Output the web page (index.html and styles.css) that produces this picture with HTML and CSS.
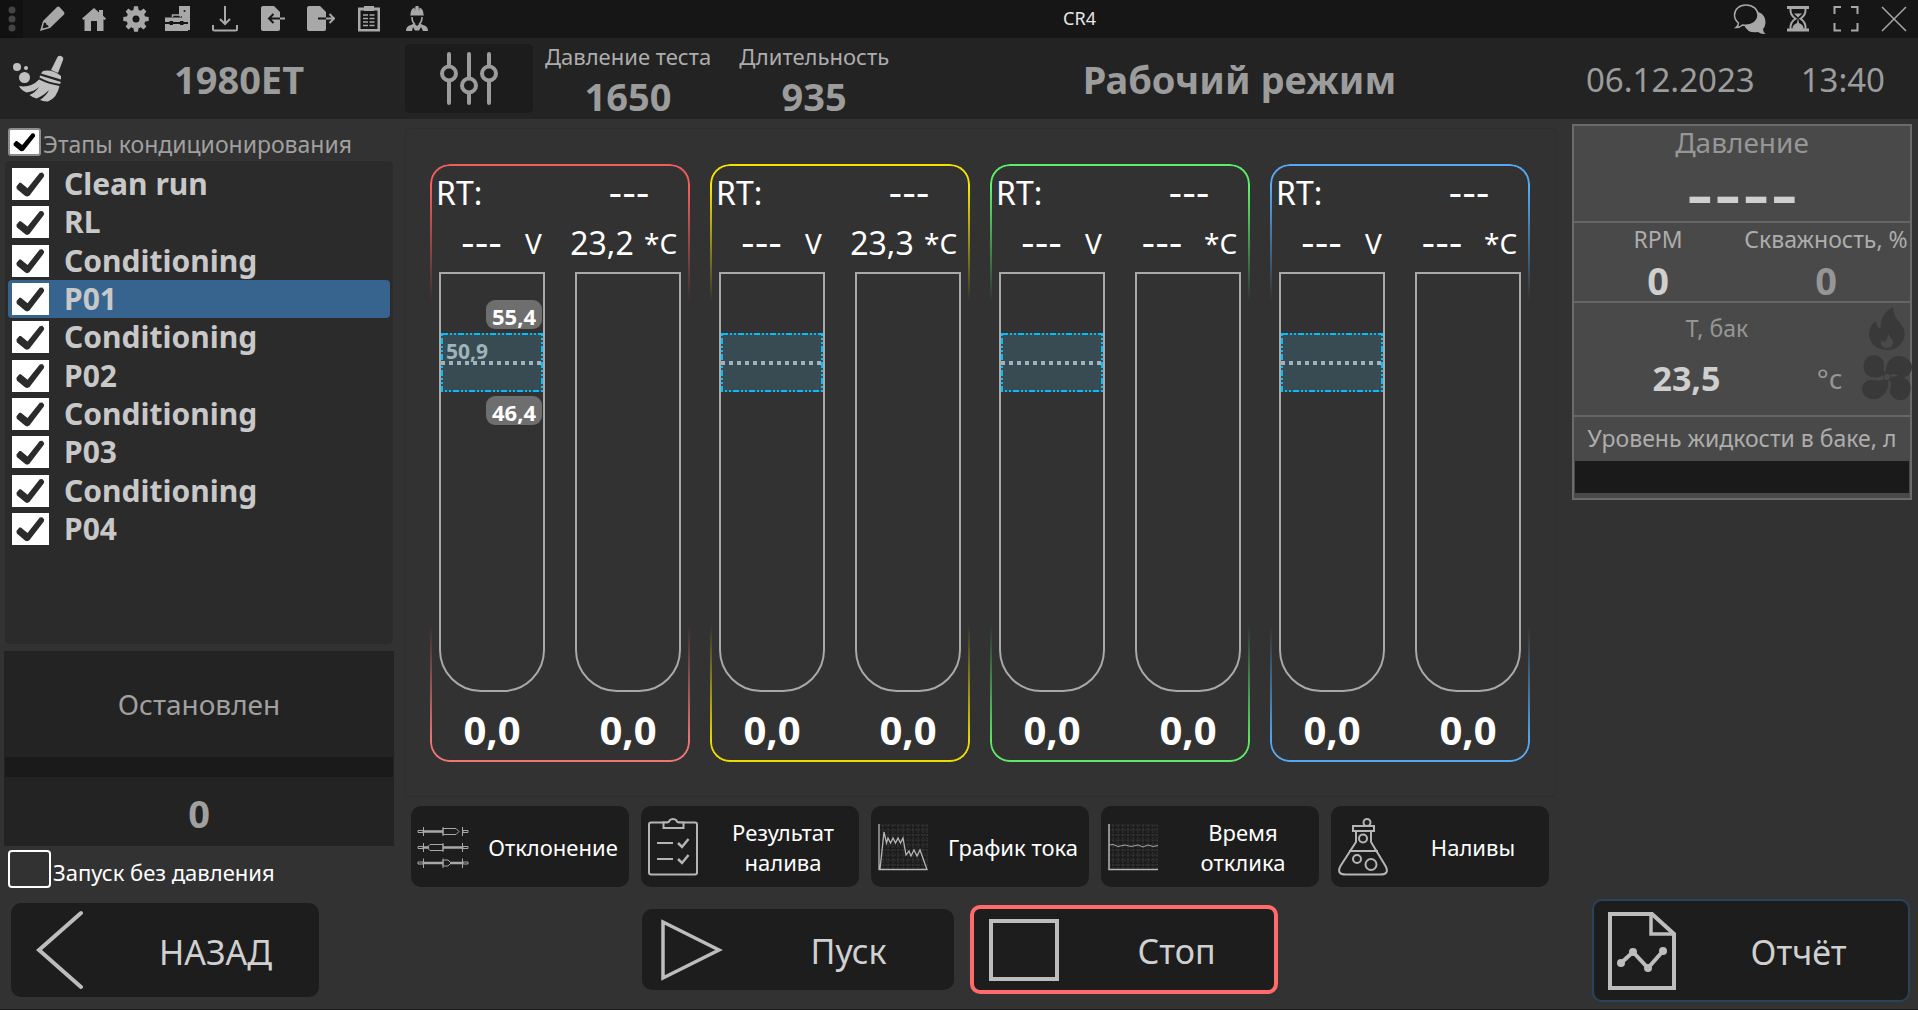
FILE: index.html
```html
<!DOCTYPE html>
<html lang="ru">
<head>
<meta charset="utf-8">
<title>CR4</title>
<meta name="viewport" content="width=device-width, initial-scale=1">
<link rel="stylesheet" href="styles.css">
</head>
<body>
<header class="titlebar">
  <div class="tb-group">
    <button class="tb-grip" aria-label="Меню"><svg width="8" height="28" viewBox="0 0 8 28"><g fill="#444"><circle cx="4" cy="5" r="3.5"/><circle cx="4" cy="14" r="3.5"/><circle cx="4" cy="23" r="3.5"/></g></svg></button>
    <button class="tb-btn" aria-label="Правка"><svg width="26" height="26" viewBox="0 0 26 26"><path fill-rule="evenodd" d="M1 25 L4 15 L18 1 Q19 0 20.500 1 L25 6 Q26 7 25 8.500 L11 22 Z M5 16.500 L3.500 22.500 L9.500 21 Q9.800 19 7.500 18.700 Q7.500 16.500 5 16.500Z"/></svg></button>
    <button class="tb-btn" aria-label="Домой"><svg width="26" height="26" viewBox="0 0 26 26"><path d="M13 2 L1 12.500 L2.500 14 L3.500 13.300 V25 H10 V15 H16 V25 H22.500 V13.300 L23.800 14 L25 12.500 L22 9.800 V4 H18 V6.500 Z"/></svg></button>
    <button class="tb-btn" aria-label="Настройки"><svg width="26" height="26" viewBox="0 0 26 26"><circle cx="13" cy="13" r="6.500" fill="none" stroke="#a8a8a8" stroke-width="6"/><g id="t"><path d="M10.300 5 L11 .3 H15 L15.700 5Z"/><path d="M10.300 21 L11 25.700 H15 L15.700 21Z"/><path d="M5 10.300 L.3 11 V15 L5 15.700Z"/><path d="M21 10.300 L25.700 11 V15 L21 15.700Z"/></g><use href="#t" transform="rotate(45 13 13)"/></svg></button>
    <button class="tb-btn" aria-label="Сервис"><svg width="26" height="26" viewBox="0 0 26 26"><path d="M14 0 H25 V24 H23 V12 H17 V10 H14Z"/><circle cx="19.500" cy="5" r="1" fill="#161616"/><path d="M0 11.500 H23 V16 H18.500 V15 H15 V16 H8 V15 H4.500 V16 H0Z M0 18 H4.500 V19 H8 V18 H15 V19 H18.500 V18 H23 V25 H0Z"/><path d="M7.500 11 V9 H15.500 V11" fill="none" stroke="#a8a8a8" stroke-width="1.500"/></svg></button>
  </div>
  <div class="tb-group tb-wide">
    <button class="tb-btn" aria-label="Загрузить"><svg width="26" height="26" viewBox="0 0 26 26"><g fill="none" stroke="#a8a8a8" stroke-width="2"><path d="M13 0 V18 M8 13 L13 18 L18 13"/><path d="M1 19 V23 Q1 24.500 2.500 24.500 H23.500 Q25 24.500 25 23 V19"/></g></svg></button>
    <button class="tb-btn" aria-label="Импорт"><svg width="26" height="26" viewBox="0 0 26 26"><path d="M1 2 Q1 0 3 0 H14 L20 6 V23 Q20 25 18 25 H3 Q1 25 1 23Z"/><path d="M25 12.500 H9 M13.500 8 L9 12.500 L13.500 17" fill="none" stroke="#161616" stroke-width="2"/><path d="M20 12.500 H25" stroke="#a8a8a8" stroke-width="2"/></svg></button>
    <button class="tb-btn" aria-label="Экспорт"><svg width="28" height="26" viewBox="0 0 28 26"><path d="M0 2 Q0 0 2 0 H13 L19 6 V23 Q19 25 17 25 H2 Q0 25 0 23Z"/><path d="M11 12.500 H19" stroke="#161616" stroke-width="2"/><path d="M19 12.500 H27 M22.500 8 L27 12.500 L22.500 17" fill="none" stroke="#a8a8a8" stroke-width="2"/></svg></button>
    <button class="tb-btn" aria-label="Протокол"><svg width="26" height="26" viewBox="0 0 26 26"><path fill-rule="evenodd" d="M2 1.500 H24 V25.500 H2Z M4.500 4.500 V23 H21.500 V4.500Z"/><rect x="8" y="0" width="10" height="5"/><path d="M7 9 H19 M7 12.500 H19 M7 16 H19 M7 19.500 H19" stroke="#a8a8a8" stroke-width="1.500" stroke-dasharray="5 1.500"/></svg></button>
    <button class="tb-btn" aria-label="Оператор"><svg width="24" height="26" viewBox="0 0 24 26"><path d="M5.500 8.500 Q5.500 3 9.500 1.500 L10 5 L10.500 0 H13.500 L14 5 L14.500 1.500 Q18.500 3 18.500 8.500 L19 9.500 H5Z"/><path d="M7 11 Q7 16 10 18.500 M17 11 Q17 16 14 18.500" fill="none" stroke="#a8a8a8" stroke-width="1.600"/><path d="M1 25 Q1 20 6 19 L9 17.500 L12 20 L15 17.500 L18 19 Q23 20 23 25 H18 L16 21 L14 24.500 H10 L8 21 L7 25Z"/></svg></button>
  </div>
  <h1 class="tb-title">CR4</h1>
  <div class="tb-group tb-wide tb-right">
    <button class="tb-btn" aria-label="Сообщения"><svg width="34" height="32" viewBox="0 0 34 32"><path d="M14 18 Q22 17 25.500 9 Q33 12 32.500 20 Q32 24 30 26 Q30 29 32.500 31 Q28 31.500 25 29 Q15 31 11 22Z"/><path d="M13 2 C6 2 1.500 6.500 1.500 12 C1.500 15.500 3 18 5.500 20 Q5.500 22.500 3 24.500 Q7 24.500 9.500 22 C18 23.500 25 19 25 12 C25 6.500 20 2 13 2Z" fill="#161616" stroke="#a8a8a8" stroke-width="1.500"/></svg></button>
    <button class="tb-btn" aria-label="Таймер"><svg width="22" height="26" viewBox="0 0 22 26"><path d="M0 0 H22 V3 H0Z M0 22.500 H22 V25.500 H0Z"/><path d="M3.500 3 Q3 9 8.500 12.750 Q3 16 3.500 23 M18.500 3 Q19 9 13.500 12.750 Q19 16 18.500 23" fill="none" stroke="#a8a8a8" stroke-width="2"/><path d="M7 7.500 H15 L11 11.500Z M11 12 L12 17 Q17 19 16.500 23 H5.500 Q5 19 10 17Z"/></svg></button>
    <button class="tb-btn" aria-label="Во весь экран"><svg width="26" height="26" viewBox="0 0 26 26"><path d="M1.500 8 V1 H8 M18 1 H24.500 V8 M24.500 17 V24.500 H18 M8 24.500 H1.500 V17" fill="none" stroke="#a8a8a8" stroke-width="2"/></svg></button>
    <button class="tb-btn" aria-label="Закрыть"><svg width="26" height="26" viewBox="0 0 26 26"><path d="M1 1 L25 25 M25 1 L1 25" stroke="#a8a8a8" stroke-width="1.500"/></svg></button>
  </div>
</header>

<section class="infobar">
  <div class="recipe">
    <svg width="54" height="48" viewBox="0 0 54 48"><g fill="#c0c0c0"><circle cx="5" cy="12" r="4"/><circle cx="14" cy="13" r="2"/><circle cx="12.500" cy="22.500" r="5.500"/><path d="M45 3 Q46 0 49 1 Q52 2 51 5 L46 18 L39 15Z"/><path d="M31 16 Q40 14 49 21 V24.500 Q39 21.500 29 18.500Z"/><path d="M28 20.500 Q38 23.500 49 27 L48 29 Q37 27.500 27.500 22.500Z"/><path d="M27 24.500 Q36 29 47.500 31 Q45 43 36 46.500 Q32 46.500 28 45 Q35 40 37 35 Q31 41 24.500 43.500 Q20 42 17.500 40 Q24 37 27 32 Q22 36.500 14.500 37.500 Q9 35 7 31 Q19 33 27 24.500Z"/></g></svg>
    <strong class="recipe-name">1980ET</strong>
  </div>
  <button class="params-btn" aria-label="Параметры"><svg width="58" height="54" viewBox="0 0 58 54"><g fill="none" stroke="#9c9c9c" stroke-width="4" stroke-linecap="round"><path d="M9 2 V14 M9 29 V51 M29 2 V26 M29 41 V51 M49 2 V14 M49 29 V51"/><circle cx="9" cy="21.500" r="7"/><circle cx="29" cy="33.500" r="7"/><circle cx="49" cy="21.500" r="7"/></g></svg></button>
  <dl class="params">
    <div><dt>Давление теста</dt><dd>1650</dd></div>
    <div><dt>Длительность</dt><dd>935</dd></div>
  </dl>
  <h2 class="mode">Рабочий режим</h2>
  <div class="clock"><span>06.12.2023</span><span>13:40</span></div>
</section>

<main class="workspace">
  <aside class="steps">
    <label class="steps-all"><input class="check check-framed" type="checkbox" checked>Этапы кондиционирования</label>
    <ul class="step-list">
      <li><label class="step"><input class="check" type="checkbox" checked>Clean run</label></li>
      <li><label class="step"><input class="check" type="checkbox" checked>RL</label></li>
      <li><label class="step"><input class="check" type="checkbox" checked>Conditioning</label></li>
      <li><label class="step step-active"><input class="check" type="checkbox" checked>P01</label></li>
      <li><label class="step"><input class="check" type="checkbox" checked>Conditioning</label></li>
      <li><label class="step"><input class="check" type="checkbox" checked>P02</label></li>
      <li><label class="step"><input class="check" type="checkbox" checked>Conditioning</label></li>
      <li><label class="step"><input class="check" type="checkbox" checked>P03</label></li>
      <li><label class="step"><input class="check" type="checkbox" checked>Conditioning</label></li>
      <li><label class="step"><input class="check" type="checkbox" checked>P04</label></li>
    </ul>
    <div class="status">
      <div class="status-text">Остановлен</div>
      <div class="status-bar"></div>
      <div class="status-count">0</div>
    </div>
    <label class="no-pressure"><input class="check check-open" type="checkbox">Запуск без давления</label>
    <button class="action back"><svg width="48" height="80" viewBox="0 0 48 80"><path d="M45 3 L3 40 L45 77" fill="none" stroke="#bdbdbd" stroke-width="4" stroke-linecap="round"/></svg><span>НАЗАД</span></button>
  </aside>

  <div class="center">
    <section class="channels">
      <article class="channel ch-red">
        <div class="rt"><span>RT:</span><span class="dashes">---</span></div>
        <div class="readings"><span class="dashes">---</span><span class="unit">V</span><span class="temp">23,2</span><span class="unit">*C</span></div>
        <div class="tubes">
          <div class="tube"><div class="zone"><svg class="zone-frame"><rect/></svg><span class="zone-line"></span><span class="limit limit-max">55,4</span><span class="target">50,9</span><span class="limit limit-min">46,4</span></div></div>
          <div class="tube"></div>
        </div>
        <div class="totals"><span>0,0</span><span>0,0</span></div>
      </article>
      <article class="channel ch-yellow">
        <div class="rt"><span>RT:</span><span class="dashes">---</span></div>
        <div class="readings"><span class="dashes">---</span><span class="unit">V</span><span class="temp">23,3</span><span class="unit">*C</span></div>
        <div class="tubes">
          <div class="tube"><div class="zone"><svg class="zone-frame"><rect/></svg><span class="zone-line"></span></div></div>
          <div class="tube"></div>
        </div>
        <div class="totals"><span>0,0</span><span>0,0</span></div>
      </article>
      <article class="channel ch-green">
        <div class="rt"><span>RT:</span><span class="dashes">---</span></div>
        <div class="readings"><span class="dashes">---</span><span class="unit">V</span><span class="dashes">---</span><span class="unit">*C</span></div>
        <div class="tubes">
          <div class="tube"><div class="zone"><svg class="zone-frame"><rect/></svg><span class="zone-line"></span></div></div>
          <div class="tube"></div>
        </div>
        <div class="totals"><span>0,0</span><span>0,0</span></div>
      </article>
      <article class="channel ch-blue">
        <div class="rt"><span>RT:</span><span class="dashes">---</span></div>
        <div class="readings"><span class="dashes">---</span><span class="unit">V</span><span class="dashes">---</span><span class="unit">*C</span></div>
        <div class="tubes">
          <div class="tube"><div class="zone"><svg class="zone-frame"><rect/></svg><span class="zone-line"></span></div></div>
          <div class="tube"></div>
        </div>
        <div class="totals"><span>0,0</span><span>0,0</span></div>
      </article>
    </section>

    <nav class="tools">
      <button class="tool"><svg width="52" height="58" viewBox="0 0 52 58"><g stroke="#a8a8a8" fill="none"><path d="M6 13.500 H26 M6 29.500 H12 M26 29.500 H46 M6 45 H26 M33 45 H46" stroke-width="2.500"/><path d="M1 12.500 H6 V14.500 H1Z M1 28.500 H6 V30.500 H1Z M1 44 H6 V46 H1Z M46 12.500 H51 V14.500 H46Z M46 28.500 H51 V30.500 H46Z M46 44 H51 V46 H46Z M26 10.500 H39 L42 13.500 L39 16.500 H26Z M26 26.500 H13 L10 29.500 L13 32.500 H26Z M26 42 H31 L34 45 L31 48 H26Z"/><path d="M6.500 9 V18 M26 9 V18 M45.500 9 V18 M6.500 25 V34 M26 25 V34 M45.500 25 V34 M6.500 40.500 V50 M26 40.500 V50 M45.500 40.500 V50"/></g></svg><span>Отклонение</span></button>
      <button class="tool"><svg width="52" height="58" viewBox="0 0 52 58"><g stroke="#b5b5b5" fill="none" stroke-width="2"><rect x="2" y="4.500" width="48" height="52" rx="2"/><path fill="#1d1d1d" d="M16.500 4.500 H20 Q22 4.500 22.500 2.500 Q24 1 26 1 Q28 1 29.500 2.500 Q30 4.500 32 4.500 H36.500 V10 H16.500Z"/><path d="M10 25 H26 M10 41 H26"/><path d="M31 25 L35 29 L41.500 21 M31 41 L35 45 L41.500 37" stroke-width="2.500"/></g></svg><span>Результат налива</span></button>
      <button class="tool"><svg width="52" height="58" viewBox="0 0 52 58"><path d="M6 7 V52 M11 7 V52 M16 7 V52 M21 7 V52 M26 7 V52 M31 7 V52 M36 7 V52 M41 7 V52 M46 7 V52 M50 7 V52 M2 7 H51 M2 12 H51 M2 17 H51 M2 22 H51 M2 27 H51 M2 32 H51 M2 37 H51 M2 42 H51 M2 47 H51" stroke="#383838" stroke-dasharray="2 1"/><path d="M2 6 V51.500 H50 L43 32 L40 38 L37 32 L34 38 L32 33 L29 37 L26 20 L23.500 25 L21 20 L18.500 25 L16 20 L13.500 25 L11 20 L9.500 25 L7 14 L3 51" fill="none" stroke="#b5b5b5" stroke-width="1.300"/></svg><span>График тока</span></button>
      <button class="tool"><svg width="52" height="58" viewBox="0 0 52 58"><path d="M6 7 V52 M11 7 V52 M16 7 V52 M21 7 V52 M26 7 V52 M31 7 V52 M36 7 V52 M41 7 V52 M46 7 V52 M50 7 V52 M2 7 H51 M2 12 H51 M2 17 H51 M2 22 H51 M2 27 H51 M2 32 H51 M2 37 H51 M2 42 H51 M2 47 H51" stroke="#383838" stroke-dasharray="2 1"/><path d="M2 6 V51.500 H51" fill="none" stroke="#b5b5b5" stroke-width="1.500"/><path d="M2 27 L6 26.500 L11 28.500 L18 27 L24 28.500 L31 27 L36 29 L41 27 L46 28.500 L51 27.500" fill="none" stroke="#a5a5a5"/></svg><span>Время отклика</span></button>
      <button class="tool"><svg width="52" height="58" viewBox="0 0 52 58"><g stroke="#b5b5b5" fill="none" stroke-width="2"><circle cx="30" cy="4.500" r="3.500"/><rect x="16" y="8" width="21" height="5"/><path d="M19 13 V24 L3.500 48 Q-1 56.500 9 56.500 H43 Q53 56.500 48.500 48 L34 24 V13 M12 33 H41"/><circle cx="26" cy="20.500" r="4"/><circle cx="20" cy="41" r="4"/><circle cx="34" cy="46.500" r="5.500"/></g></svg><span>Наливы</span></button>
    </nav>

    <div class="actions">
      <button class="action start"><svg width="64" height="66" viewBox="0 0 64 66"><path d="M4 5 L60 33 L4 61Z" fill="none" stroke="#bdbdbd" stroke-width="3.500"/></svg><span>Пуск</span></button>
      <button class="action stop"><svg width="70" height="66" viewBox="0 0 70 66"><path d="M2 4 H68 V62 H2Z" fill="none" stroke="#bdbdbd" stroke-width="4"/></svg><span>Стоп</span></button>
    </div>
  </div>

  <aside class="gauges">
    <div class="gauge-panel">
      <section class="g-pressure"><h3 class="g-title">Давление</h3><div class="g-big">----</div></section>
      <section class="g-pump">
        <div><div class="g-label">RPM</div><div class="g-num">0</div></div>
        <div><div class="g-label">Скважность, %</div><div class="g-num g-dim">0</div></div>
      </section>
      <section class="g-tank">
        <div class="g-temp">
          <div class="g-label g-dim">Т, бак</div>
          <div class="g-temp-value"><strong>23,5</strong><span>°c</span></div>
        </div>
        <div class="g-icons">
          <svg width="38" height="44" viewBox="0 0 38 44"><path fill-rule="evenodd" fill="#393939" d="M25 0 Q25 9 33 17 Q38 24 36 31 Q32 43 19 43 Q3 42 1 28 Q1 19 8 14 Q8 20 12.500 22 Q12 7 25 0Z M20 26 Q20 32 17 35 Q14 35 13.500 32 Q11 41 19 41 Q27 40 24.500 33 Q22 31 20 26Z"/></svg>
          <svg width="50" height="46" viewBox="0 0 50 46"><path fill="#393939" d="M21 20 C15 24 8 23 4 19 C0 14 1 5 6 2 C11 -1 18 0 21 5 C23 9 21 13 22 16 L24 18 C23 9 28 2 36 1 C44 1 50 6 50 12 C50 18 45 23 40 22 C35 21 33 18 28 20 L29 22 C37 20 45 22 48 29 C50 36 47 43 41 45 C34 46 29 42 28 36 C28 32 31 29 28 26 L26 25 C28 34 22 42 14 44 C7 45 1 41 0 35 C0 29 4 25 9 25 C14 25 18 27 22 24Z"/><circle cx="25" cy="22" r="3" fill="#494949"/></svg>
        </div>
      </section>
      <section class="g-level"><div class="g-label">Уровень жидкости в баке, л</div><div class="g-bar"></div></section>
    </div>
    <button class="action report"><svg width="70" height="80" viewBox="0 0 70 80"><g fill="none" stroke="#bdbdbd" stroke-width="4"><path d="M3 3 H45 L67 23 V77 H3Z"/><path d="M44 3 V23 H67" stroke-width="3.500"/><path d="M14 52 L26 41 L41 57 L56 40"/></g><g fill="#bdbdbd"><circle cx="14" cy="52" r="4"/><circle cx="26" cy="41" r="4"/><circle cx="41" cy="57" r="4"/><circle cx="56" cy="40" r="4"/></g></svg><span>Отчёт</span></button>
  </aside>
</main>
</body>
</html>
```
FILE: styles.css
```css
* { box-sizing: border-box; }

body {
  margin: 0;
  min-height: 100vh;
  display: flex;
  flex-direction: column;
  background: #323232;
  border-bottom: 1px solid #1a1a1a;
  color: #fff;
  font-family: "Noto Sans", "Open Sans", sans-serif;
  font-size: 22px;
  line-height: 30px;
}

h1, h2, h3, dl, dd, ul { margin: 0; padding: 0; }
ul { list-style: none; }
svg { display: block; flex: none; }

button {
  margin: 0;
  padding: 0;
  border: 0;
  background: none;
  color: inherit;
  font: inherit;
}

/* Window title bar */
.titlebar {
  position: relative;
  display: flex;
  height: 38px;
  background: #161616;
}
.tb-group { display: flex; height: 38px; }
.tb-grip {
  width: 23px;
  margin-right: 8px;
  background: #111;
  display: grid;
  place-items: center;
}
.tb-btn {
  width: 42px;
  display: grid;
  place-items: center;
  fill: #a8a8a8;
}
.tb-wide .tb-btn { width: 48px; }
.tb-wide { margin-left: 2px; }
.tb-right { margin-left: auto; }
.tb-title {
  position: absolute;
  left: 0;
  right: 0;
  width: max-content;
  margin: 3px auto;
  padding-left: 241px;
  color: #e6e6e6;
  font-size: 18px;
  font-weight: 400;
}

/* Recipe, test parameters, mode and clock */
.infobar {
  display: flex;
  align-items: center;
  height: 81px;
  background: #232323;
  color: #9c9c9c;
}
.recipe {
  width: 405px;
  display: flex;
  align-items: center;
  padding-left: 12px;
}
.recipe-name {
  flex: 1;
  padding-left: 7px;
  font-size: 38px;
  text-align: center;
}
.params-btn {
  width: 128px;
  height: 69px;
  border-radius: 5px;
  background: #1c1c1c;
  display: grid;
  place-items: center;
}
.params {
  display: flex;
  gap: 28px;
  margin-left: 12px;
  padding-top: 2px;
  text-align: center;
}
.params dt { color: #adadad; }
.params dd {
  padding-top: 2px;
  font-size: 38px;
  font-weight: 700;
  line-height: 46px;
}
.mode {
  flex: 1;
  padding-left: 4px;
  font-size: 38px;
  text-align: center;
}
.clock {
  display: flex;
  gap: 46px;
  padding: 2px 33px 0 0;
  font-size: 33px;
}

.workspace {
  flex: 1;
  display: grid;
  grid-template-columns: 400px minmax(0, 1fr) 358px;
}

/* Check boxes */
.check {
  appearance: none;
  flex: none;
  width: 37px;
  height: 32px;
  margin: 0;
  background: #fff;
}
.check:checked::before {
  content: "";
  display: block;
  width: 100%;
  height: 100%;
  background: #2b2b2b;
  clip-path: polygon(12% 57%, 20% 46%, 24% 46%, 42% 63%, 75% 15%, 82% 14%, 87% 21%, 86% 27%, 47% 86%, 41% 89%, 36% 87%, 13% 65%);
}
.check-framed {
  width: 33px;
  height: 28px;
  border: 2px solid #8d8d8d;
  border-radius: 3px;
}
.check-framed:checked::before { background: #000; }
.check-open {
  width: 43px;
  height: 38px;
  border: 2px solid #fff;
  border-radius: 4px;
  background: none;
}

/* Left column */
.steps {
  display: flex;
  flex-direction: column;
  padding: 9px 6px 12px 4px;
}
.steps-all {
  display: flex;
  gap: 2px;
  padding-left: 4px;
  height: 33px;
  color: #a0a0a0;
  font-size: 23px;
  line-height: 32px;
}
.step-list {
  flex: 1;
  display: flex;
  flex-direction: column;
  margin: 0 1px 7px;
  padding: 4px 3px 96px;
  border-radius: 5px;
  background: #2b2b2b;
}
.step-list li { flex: 1; display: flex; }
.step {
  flex: 1;
  display: flex;
  align-items: center;
  gap: 15px;
  padding-left: 4px;
  border-radius: 4px;
  color: #c8c8c8;
  font-size: 30px;
  font-weight: 700;
}
.step-active { background: #36648f; }
.status { background: #232323; color: #a0a0a0; text-align: center; }
.status-text { font-size: 28px; line-height: 106px; }
.status-bar { height: 20px; margin: 0 1px; background: #1a1a1a; }
.status-count { padding-top: 3px; font-size: 38px; font-weight: 700; line-height: 66px; }
.no-pressure {
  display: flex;
  align-items: flex-end;
  gap: 2px;
  margin: 4px 0 15px;
  padding-left: 4px;
  line-height: 32px;
}

/* Large buttons with an icon on the left */
.action {
  display: flex;
  align-items: center;
  gap: 20px;
  border-radius: 10px;
  background: #1d1d1d;
  color: #d0d0d0;
  font-size: 34px;
}
.action span { flex: 1; padding-top: 3px; text-align: center; }
.back { width: 308px; height: 94px; margin-left: 7px; padding-left: 25px; gap: 28px; }
.start { flex: 1 1 312px; height: 81px; padding-left: 17px; }
.stop { flex: 1 1 308px; height: 89px; padding-left: 15px; border: 4px solid #ff6b6b; }
.report { height: 103px; margin: auto 8px 0 20px; padding: 0 8px 0 13px; border: 2px solid #28435a; }

/* Centre column */
.center {
  display: flex;
  flex-direction: column;
  padding: 9px 4px 15px 5px;
}
.channels {
  flex: 1;
  display: grid;
  grid-template-columns: repeat(4, minmax(0, 1fr));
  gap: 20px;
  padding: 35px 25px 34px 24px;
  border: 1px solid #2e2e2e;
  border-radius: 4px;
}
.channel {
  position: relative;
  display: flex;
  flex-direction: column;
  padding: 9px 9px 7px;
}
.channel::before {
  content: "";
  position: absolute;
  inset: 0;
  padding: 2px;
  border-radius: 20px;
  background: linear-gradient(var(--tone), var(--tone) 4%, transparent 23%, transparent 77%, var(--tone-low) 97%);
  mask: linear-gradient(#000 0 0) content-box exclude, linear-gradient(#000 0 0);
  pointer-events: none;
}
.ch-red { --tone: #f55c5c; --tone-low: #f07676; }
.ch-yellow { --tone: #f2e200; --tone-low: #ecdc00; }
.ch-green { --tone: #5cf06a; --tone-low: #5fe868; }
.ch-blue { --tone: #55a8f2; --tone-low: #55a8f0; }

.rt, .readings {
  display: grid;
  height: 40px;
  font-size: 32px;
  line-height: 40px;
}
.rt { grid-template-columns: 141fr 104fr; margin: 0 0 10px -3px; }
.readings { grid-template-columns: 85fr 37fr 82fr 38fr; margin-bottom: 9px; }
.dashes {
  font-family: "DejaVu Sans", sans-serif;
  font-size: 38px;
  text-align: center;
}
.temp { text-align: center; }
.unit { padding-left: 1px; font-size: 28px; }
.tubes { flex: 1; display: grid; grid-template-columns: 1fr 1fr; gap: 30px; }
.tube {
  position: relative;
  border: 2px solid #a9a9a9;
  border-radius: 0 0 42px 42px;
}
.totals {
  display: grid;
  grid-template-columns: 1fr 1fr;
  gap: 30px;
  margin-top: 13px;
  font-size: 40px;
  font-weight: 700;
  line-height: 50px;
  text-align: center;
}

/* Tolerance zone over a tube */
.zone {
  position: absolute;
  left: 0;
  right: 0;
  top: 59px;
  height: 59px;
  background: #384a52;
}
.zone-frame { position: absolute; width: 100%; height: 100%; }
.zone-frame rect {
  x: 1px;
  y: 1px;
  width: calc(100% - 2px);
  height: calc(100% - 2px);
  fill: none;
  stroke: #00bfff;
  stroke-width: 2px;
  stroke-dasharray: 6 2 2 2 2 2;
}
.zone-line {
  position: absolute;
  left: 0;
  right: 2px;
  top: 28px;
  height: 4px;
  background: repeating-linear-gradient(90deg, #9fb3ba 0 4px, transparent 4px 8px);
}
.limit {
  position: absolute;
  right: 1px;
  width: 56px;
  height: 29px;
  border-radius: 9px;
  background: #6e6e6e;
  font-weight: 700;
  line-height: 32px;
  text-align: center;
}
.limit-max { bottom: calc(100% + 4px); }
.limit-min { top: calc(100% + 4px); }
.target {
  position: absolute;
  left: 5px;
  top: 3px;
  color: #9fb3ba;
  font-size: 21px;
  font-weight: 700;
}

.tools {
  display: grid;
  grid-template-columns: repeat(5, minmax(0, 1fr));
  gap: 12px;
  margin: 9px 7px 18px 6px;
}
.tool {
  display: flex;
  align-items: center;
  gap: 12px;
  height: 81px;
  padding: 0 4px 0 6px;
  border-radius: 10px;
  background: #1d1d1d;
}
.tool span { flex: 1; }
.actions {
  display: flex;
  align-items: center;
  gap: 16px;
  padding: 0 278px 0 237px;
}

/* Right column */
.gauges {
  display: flex;
  flex-direction: column;
  padding: 5px 0 7px 12px;
}
.gauge-panel {
  margin-right: 6px;
  border: 2px solid #6b6b6b;
  background: #494949;
  color: #adadad;
  text-align: center;
}
.gauge-panel section + section { border-top: 2px solid #656565; }
.g-pressure { height: 95px; }
.g-title { color: #969696; font-size: 28px; font-weight: 400; line-height: 32px; }
.g-big {
  color: #cfcfcf;
  font-family: "DejaVu Sans", sans-serif;
  font-size: 78px;
  line-height: 72px;
}
.g-label { font-size: 23px; }
.g-pump { display: grid; grid-template-columns: 1fr 1fr; height: 80px; padding-top: 1px; }
.g-num { padding-top: 4px; color: #cfcfcf; font-size: 38px; font-weight: 700; line-height: 44px; }
.g-pump .g-dim, .g-label.g-dim { color: #969696; }
.g-tank { display: grid; grid-template-columns: 1fr 50px; height: 114px; }
.g-temp { padding-top: 10px; }
.g-temp-value {
  display: grid;
  grid-template-columns: 225fr 61fr;
  padding-top: 14px;
  color: #cfcfcf;
  font-size: 34px;
  line-height: 42px;
}
.g-temp-value span { color: #969696; font-size: 28px; }
.g-icons {
  display: flex;
  flex-direction: column;
  align-items: center;
  gap: 4px;
  margin-right: -4px;
  padding-top: 4px;
}
.g-level { padding-top: 6px; }
.g-bar { height: 32px; margin: 8px 1px 5px; background: #1a1a1a; }
```
